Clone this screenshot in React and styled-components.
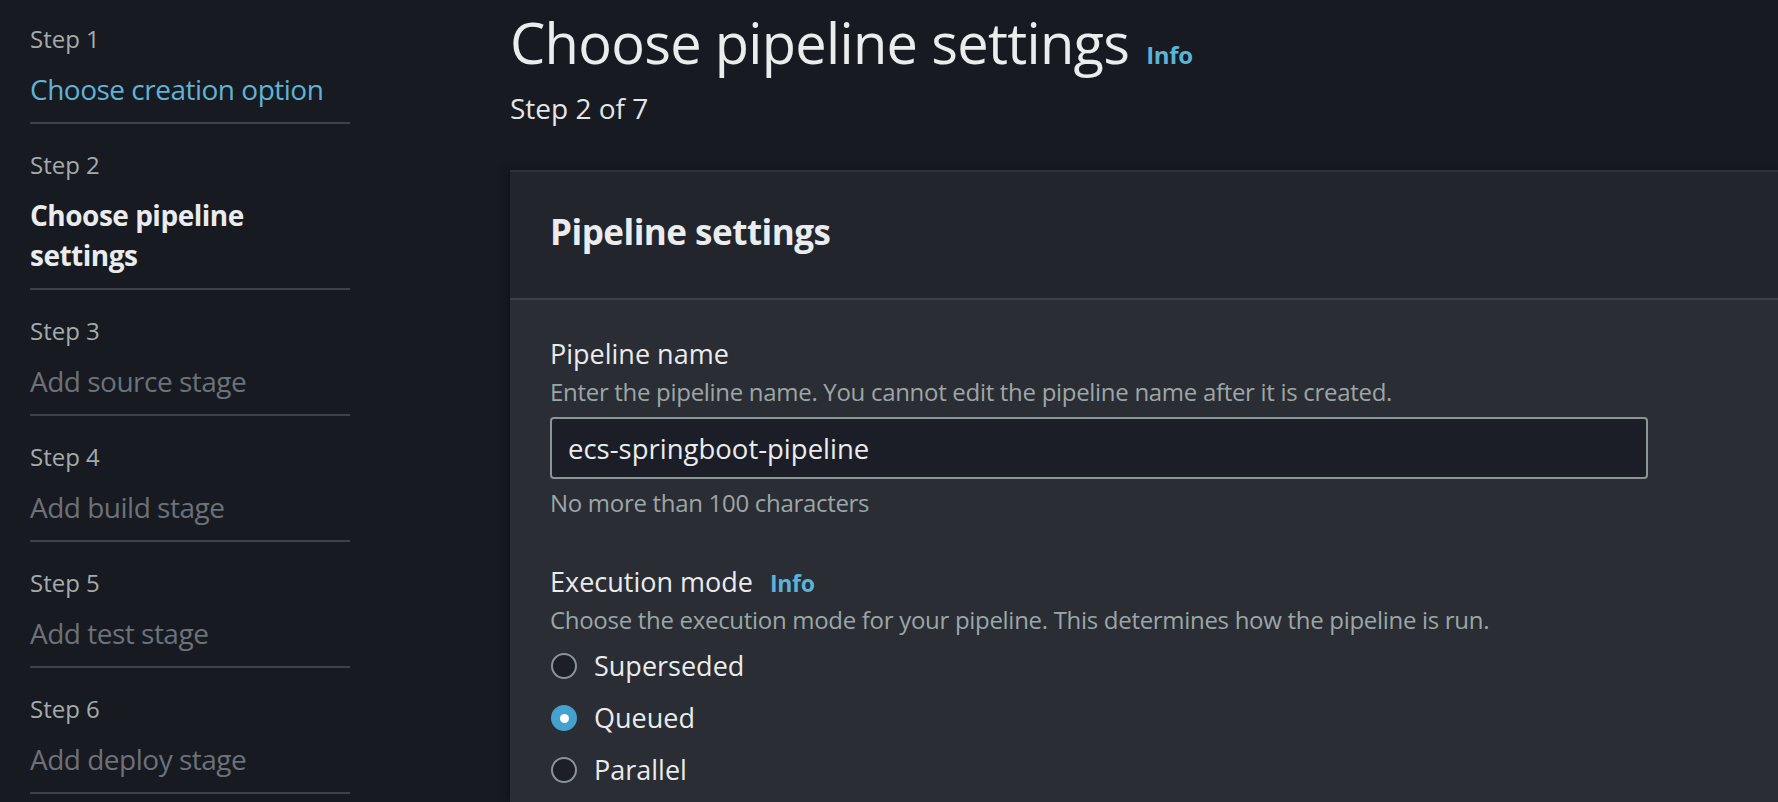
import styled, { createGlobalStyle } from 'styled-components';

const GlobalStyle = createGlobalStyle`
  html, body {
    margin: 0;
    padding: 0;
    height: 100%;
    overflow: hidden;
    background: #171a21;
  }
  body {
    font-family: "Open Sans", "Noto Sans", sans-serif;
    color: #e9ebed;
  }
  * {
    box-sizing: border-box;
  }
`;

const steps = [
  { n: 1, title: 'Choose creation option', state: 'done' },
  { n: 2, title: 'Choose pipeline settings', state: 'current' },
  { n: 3, title: 'Add source stage', state: 'todo' },
  { n: 4, title: 'Add build stage', state: 'todo' },
  { n: 5, title: 'Add test stage', state: 'todo' },
  { n: 6, title: 'Add deploy stage', state: 'todo' },
];

const modes = [
  { label: 'Superseded', checked: false },
  { label: 'Queued', checked: true },
  { label: 'Parallel', checked: false },
];

const App = () => {
  return (
    <>
      <GlobalStyle />
      <Page>
        <Sidebar>
          <StepList>
            {steps.map((step) => (
              <StepItem key={step.n}>
                <StepLabel>Step {step.n}</StepLabel>
                <StepTitle $state={step.state}>{step.title}</StepTitle>
              </StepItem>
            ))}
          </StepList>
        </Sidebar>

        <Main>
          <PageHeader>
            <TitleRow>
              <Title>Choose pipeline settings</Title>
              <InfoLink $size={24}>Info</InfoLink>
            </TitleRow>
            <Subtitle>Step 2 of 7</Subtitle>
          </PageHeader>

          <Panel>
            <PanelHeader>
              <PanelTitle>Pipeline settings</PanelTitle>
            </PanelHeader>
            <PanelBody>
              <Field>
                <Label>Pipeline name</Label>
                <Description>
                  Enter the pipeline name. You cannot edit the pipeline name after it is created.
                </Description>
                <Input defaultValue="ecs-springboot-pipeline" />
                <Constraint>No more than 100 characters</Constraint>
              </Field>

              <Field>
                <LabelRow>
                  <Label>Execution mode</Label>
                  <InfoLink $size={23}>Info</InfoLink>
                </LabelRow>
                <Description>
                  Choose the execution mode for your pipeline. This determines how the pipeline is run.
                </Description>
                <RadioGroup>
                  {modes.map((mode) => (
                    <RadioRow key={mode.label}>
                      <RadioCircle $checked={mode.checked} />
                      <RadioLabel>{mode.label}</RadioLabel>
                    </RadioRow>
                  ))}
                </RadioGroup>
              </Field>
            </PanelBody>
          </Panel>
        </Main>
      </Page>
    </>
  );
};

export default App;

const Page = styled.div`
  display: grid;
  grid-template-columns: 510px 1fr;
  height: 802px;
  overflow: hidden;
`;

const Sidebar = styled.nav`
  padding-left: 30px;
`;

const StepList = styled.ol`
  list-style: none;
  margin: -2px 0 0;
  padding: 0;
  width: 320px;
`;

const StepItem = styled.li`
  padding: 25px 0 13px;
  border-bottom: 2px solid #3e434b;
`;

const StepLabel = styled.div`
  font-size: 24px;
  line-height: 32px;
  color: #a3abad;
  margin-bottom: 14px;
`;

const StepTitle = styled.div`
  font-size: 28px;
  line-height: 40px;
  letter-spacing: -0.5px;
  max-width: 305px;
  font-weight: ${(p) => (p.$state === 'current' ? 700 : 400)};
  color: ${(p) =>
    p.$state === 'done' ? '#5fb3d6' : p.$state === 'current' ? '#e9ebed' : '#6c717a'};
`;

const Main = styled.main`
  display: flex;
  flex-direction: column;
  min-width: 0;
`;

const PageHeader = styled.header`
  padding-top: 10px;
  margin-bottom: 44px;
`;

const TitleRow = styled.div`
  display: flex;
  align-items: baseline;
  gap: 17px;
`;

const Title = styled.h1`
  margin: 0;
  font-size: 56px;
  line-height: 64px;
  font-weight: 400;
  letter-spacing: -0.7px;
  color: #eaeced;
`;

const InfoLink = styled.a`
  font-size: ${(p) => p.$size}px;
  font-weight: 700;
  color: #5ab3d8;
  letter-spacing: -0.3px;
  cursor: pointer;
`;

const Subtitle = styled.div`
  margin-top: 16px;
  font-size: 28px;
  line-height: 36px;
  color: #e3e6e8;
`;

const Panel = styled.section`
  background: #2a2d33;
  border-top: 2px solid #2f323a;
  box-shadow: -4px 0 8px rgba(0, 0, 0, 0.25);
  flex: 1;
`;

const PanelHeader = styled.div`
  background: #22252c;
  padding: 37px 40px 43px;
  border-bottom: 2px solid #3d4047;
`;

const PanelTitle = styled.h2`
  margin: 0;
  font-size: 35px;
  line-height: 46px;
  font-weight: 700;
  letter-spacing: -0.5px;
  color: #eaeced;
`;

const PanelBody = styled.div`
  padding: 34px 40px 0;
  display: flex;
  flex-direction: column;
  gap: 43px;
`;

const Field = styled.div`
  display: flex;
  flex-direction: column;
`;

const LabelRow = styled.div`
  display: flex;
  align-items: baseline;
  gap: 17px;
`;

const Label = styled.label`
  font-size: 27px;
  line-height: 40px;
  color: #e9ebed;
`;

const Description = styled.div`
  margin-top: 2px;
  font-size: 24px;
  line-height: 32px;
  letter-spacing: -0.3px;
  color: #9ca6a8;
`;

const Input = styled.input`
  margin-top: 9px;
  width: 1098px;
  height: 62px;
  padding: 0 16px;
  border: 2px solid #8c9595;
  border-radius: 4px;
  background: #1b1e26;
  color: #eaeced;
  font-family: inherit;
  font-size: 27.5px;
  outline: none;
`;

const Constraint = styled.div`
  margin-top: 8px;
  font-size: 24px;
  line-height: 32px;
  letter-spacing: -0.3px;
  color: #9ca6a8;
`;

const RadioGroup = styled.div`
  margin-top: 10px;
  display: flex;
  flex-direction: column;
  gap: 12px;
`;

const RadioRow = styled.div`
  display: flex;
  align-items: center;
  gap: 17px;
  height: 40px;
`;

const RadioCircle = styled.span`
  position: relative;
  width: 26px;
  height: 26px;
  margin-left: 1px;
  border-radius: 50%;
  border: 2px solid ${(p) => (p.$checked ? '#45a1cd' : '#8a9494')};
  background: ${(p) => (p.$checked ? '#45a1cd' : '#1c1f26')};
  flex: none;

  &::after {
    content: '';
    display: ${(p) => (p.$checked ? 'block' : 'none')};
    position: absolute;
    inset: 0;
    margin: auto;
    width: 9px;
    height: 9px;
    border-radius: 50%;
    background: #ffffff;
  }
`;

const RadioLabel = styled.span`
  font-size: 27px;
  line-height: 40px;
  color: #e9ebed;
`;
